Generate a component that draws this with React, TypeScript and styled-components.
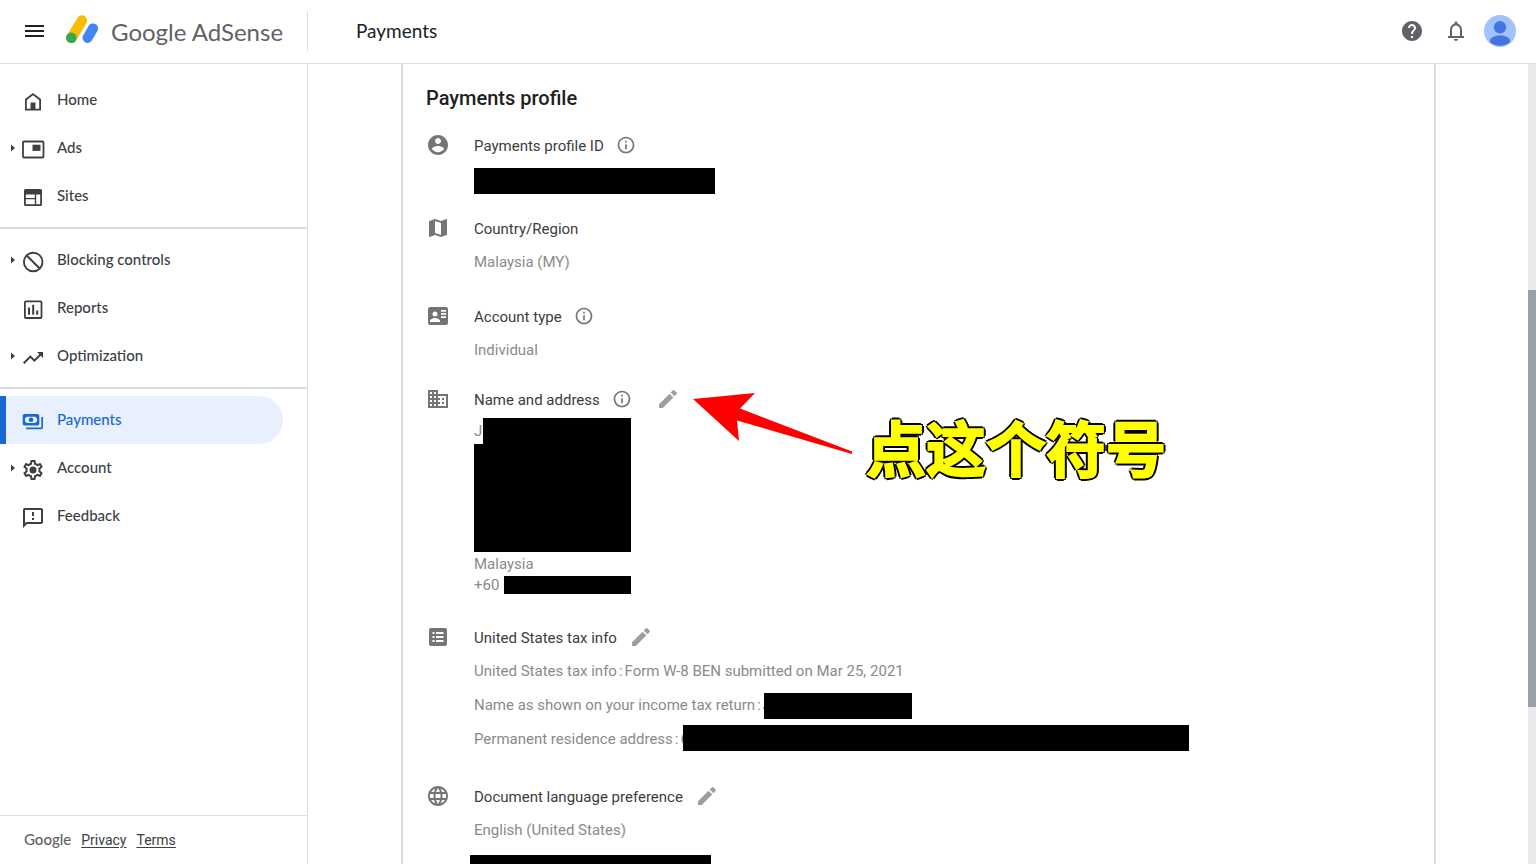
import React from "react";
import styled, { createGlobalStyle, css } from "styled-components";

const brandFont = `Lato, "Open Sans", sans-serif`;
const bodyFont = `Roboto, "Liberation Sans", sans-serif`;

const GlobalStyle = createGlobalStyle`
  *, *::before, *::after { box-sizing: border-box; }
  body { margin: 0; background: #fff; font-family: ${bodyFont}; color: #3c4043; }
  button { border: 0; padding: 0; background: none; color: inherit; font: inherit; cursor: pointer; }
  h1, h2, h3, p, ul { margin: 0; padding: 0; font-size: inherit; font-weight: inherit; }
  ul { list-style: none; }
  svg { display: block; flex: none; }
`;

const Shell = styled.div`
  display: grid;
  grid-template-rows: 64px minmax(0, 1fr);
  height: 100vh;
  overflow: hidden;
`;

const Header = styled.header`
  display: flex;
  align-items: center;
  border-bottom: 1px solid #e0e0e0;
  padding: 0 20px 1px 0;
`;

const BrandArea = styled.div`
  display: flex;
  align-items: center;
  width: 308px;
  height: 40px;
  padding-left: 22px;
  border-right: 1px solid #e0e0e0;
`;

const IconButton = styled.button`
  display: flex;
  color: #5f6368;
`;

const MenuButton = styled(IconButton)`
  color: #202124;
  margin-right: 18px;
`;

const Brand = styled.a`
  display: flex;
  align-items: center;
  gap: 13px;
  color: #5f6368;
  font: 400 24px/32px ${brandFont};
  text-decoration: none;
  white-space: nowrap;
`;

const BrandName = styled.span`
  padding-top: 2px;
`;

const PageTitle = styled.h1`
  flex: 1;
  padding-left: 48px;
  color: #202124;
  font: 400 19px/24px ${brandFont};
`;

const HeaderActions = styled.div`
  display: flex;
  align-items: center;
  gap: 20px;
`;

const AvatarButton = styled.button`
  margin-left: -4px;
`;

const Body = styled.div`
  display: grid;
  grid-template-columns: 308px minmax(0, 1fr) 8px;
  min-height: 0;
`;

const Sidebar = styled.nav`
  display: flex;
  flex-direction: column;
  min-height: 0;
  border-right: 1px solid #e0e0e0;
`;

const NavGroups = styled.div`
  flex: 1;
  min-height: 0;
  padding-top: 12px;
`;

const NavGroup = styled.ul`
  & + & {
    margin-top: 7px;
    padding-top: 7px;
    border-top: 2px solid #dadce0;
  }
`;

const NavLink = styled.a<{ $active?: boolean }>`
  display: flex;
  align-items: center;
  height: 48px;
  margin-right: 24px;
  color: #3c4043;
  font: 500 15px/20px ${brandFont};
  text-decoration: none;
  ${(p) =>
    p.$active &&
    css`
      color: #1967d2;
      background: #e8f0fe;
      border-radius: 0 24px 24px 0;
      box-shadow: inset 6px 0 #1967d2;
    `}
`;

const ExpandMark = styled.span`
  display: flex;
  justify-content: flex-end;
  width: 21px;
  padding-right: 6px;
`;

const NavIcon = styled.span`
  padding-top: 4px;
  margin-right: 12px;
`;

const NavLabel = styled.span`
  padding-bottom: 2px;
`;

const Footer = styled.footer`
  display: flex;
  align-items: center;
  gap: 10px;
  height: 49px;
  padding-left: 24px;
  border-top: 1px solid #e0e0e0;
  font-size: 14px;
  line-height: 20px;
  color: #3c4043;
`;

const FooterBrand = styled.span`
  padding-bottom: 2px;
  font: 500 15px/20px ${brandFont};
  color: #5f6368;
`;

const FooterLink = styled.a`
  color: inherit;
  text-underline-offset: 2px;
`;

const Main = styled.main`
  overflow: hidden;
  padding: 0 92px 0 93px;
`;

const Card = styled.section`
  position: relative;
  min-height: 100%;
  padding: 20px 24px 0 23px;
  border: solid #dadce0;
  border-width: 0 2px;
`;

const CardTitle = styled.h2`
  margin-bottom: 21px;
  color: #212121;
  font-size: 20px;
  font-weight: 500;
  line-height: 28px;
`;

const Entry = styled.section<{ $after: number }>`
  display: grid;
  grid-template-columns: 24px minmax(0, 1fr);
  column-gap: 24px;
  margin-bottom: ${(p) => p.$after}px;
  color: #757575;
  white-space: nowrap;
`;

const EntryHead = styled.div`
  display: flex;
  align-items: center;
  gap: 12px;
  height: 24px;
  color: #3c3c3c;
  font-size: 15px;
  line-height: 24px;
`;

const EntryLabel = styled.h3`
  padding-top: 2px;
`;

const InfoButton = styled(IconButton)`
  color: #757575;
  & + button { margin-left: 12px; }
`;

const EditButton = styled(IconButton)`
  color: #9e9e9e;
`;

const Values = styled.div<{ $top?: number; $gap?: number }>`
  display: flex;
  flex-direction: column;
  gap: ${(p) => p.$gap ?? 0}px;
  padding-top: ${(p) => p.$top ?? 10}px;
  color: #8a8a8a;
  font-size: 15px;
  line-height: 24px;
`;

const Value = styled.div<{ $align?: string; $height?: number }>`
  display: flex;
  align-items: ${(p) => p.$align ?? "flex-start"};
  height: ${(p) => p.$height ?? 24}px;
  line-height: ${(p) => p.$height ?? 24}px;
`;

const Colon = styled.span`
  padding: 0 2px;
`;

const Redaction = styled.span<{ $w: number; $h?: number; $shift?: number }>`
  flex: none;
  width: ${(p) => p.$w}px;
  height: ${(p) => p.$h ?? 26}px;
  margin-left: ${(p) => p.$shift ?? 0}px;
  background: #000;
  z-index: 1;
`;

const Annotation = styled.div`
  position: absolute;
  left: 290px;
  top: 328px;
  display: flex;
  pointer-events: none;
`;

const Callout = styled.p`
  padding: 10px 0 0 13px;
  color: #ff0;
  font: 700 60px/88px "Noto Sans CJK SC", sans-serif;
  -webkit-text-stroke: 2px #ff0;
  text-shadow:
    3px 0 #000, -3px 0 #000, 0 3px #000, 0 -3px #000,
    2px 2px #000, -2px 2px #000, 2px -2px #000, -2px -2px #000;
  white-space: nowrap;
`;

const ScrollTrack = styled.div`
  display: grid;
  grid-template-rows: 226fr 417fr 157fr;
  background: #e8eaed;
`;

const ScrollThumb = styled.div`
  grid-row: 2;
  background: #9aa0a6;
`;

type IconProps = { size?: number; children: React.ReactNode };
const Icon = ({ size = 24, children }: IconProps) => (
  <svg width={size} height={size} viewBox="0 0 24 24" fill="currentColor" aria-hidden="true">
    {children}
  </svg>
);

const navIcons = {
  home: (
    <>
      <path fillRule="evenodd" d="M12 3l8 6v11.500H4V9zM12 5.300L5.800 10v8.800h12.400V10z" />
      <path d="M9.500 12.500h5v7h-5z" />
    </>
  ),
  ads: (
    <>
      <rect x="2" y="3.500" width="20.500" height="16" rx="1" fill="none" stroke="currentColor" strokeWidth="1.800" />
      <path d="M11.500 6.700h8v6.200h-8z" />
    </>
  ),
  sites: (
    <path
      fillRule="evenodd"
      d="M4.500 3h15A1.500 1.500 0 0121 4.500v14a1.500 1.500 0 01-1.500 1.500h-15A1.500 1.500 0 013 18.500v-14A1.500 1.500 0 014.500 3zM4.800 8.400v3.500h9V8.400zM4.800 13.200v5h9v-5zM15.200 8.400v9.800h4V8.400z"
    />
  ),
  block: (
    <g fill="none" stroke="currentColor" strokeWidth="1.900">
      <circle cx="12.200" cy="12" r="9.300" />
      <path d="M5.700 5.500l13 13" />
    </g>
  ),
  reports: (
    <>
      <rect x="3.900" y="3.400" width="16.600" height="16.600" rx="1" fill="none" stroke="currentColor" strokeWidth="1.800" />
      <path d="M7 9.400h2v7.300H7zM11.200 6.700h2v10h-2zM15.200 12.500h2v4.200h-2z" />
    </>
  ),
  trend: <path d="M16 6l2.290 2.290-4.880 4.880-4-4L2 16.590 3.410 18l6-6 4 4 6.300-6.290L22 12V6z" />,
  payments: (
    <>
      <path
        fillRule="evenodd"
        d="M3.500 4h13A1.800 1.800 0 0118.300 5.800v8A1.800 1.800 0 0116.500 15.600h-13A1.800 1.800 0 011.700 13.800v-8A1.800 1.800 0 013.500 4zM5.500 6.700A1.800 1.800 0 014 8.200v3.200a1.800 1.800 0 011.500 1.500h9a1.800 1.800 0 011.500-1.500V8.200a1.800 1.800 0 01-1.500-1.500z"
      />
      <circle cx="10" cy="9.800" r="2.300" />
      <path d="M20.300 7H22v10.500a1.800 1.800 0 01-1.800 1.800H5v-1.900h15.300z" />
    </>
  ),
  account: (
    <>
      <path d="M19.430 12.980c.04-.32.07-.64.07-.98s-.03-.66-.07-.98l2.110-1.650c.19-.15.24-.42.12-.64l-2-3.460a.5.5 0 00-.61-.22l-2.490 1c-.52-.4-1.080-.73-1.690-.98l-.38-2.650A.488.488 0 0014 2h-4c-.25 0-.46.18-.49.42l-.38 2.650c-.61.25-1.170.59-1.690.98l-2.490-1a.566.566 0 00-.18-.03c-.17 0-.34.09-.43.25l-2 3.460c-.13.22-.07.49.12.64l2.110 1.650c-.04.32-.07.65-.07.98s.03.66.07.98l-2.110 1.650c-.19.15-.24.42-.12.64l2 3.460a.5.5 0 00.61.22l2.490-1c.52.4 1.080.73 1.690.98l.38 2.650c.03.24.24.42.49.42h4c.25 0 .46-.18.49-.42l.38-2.650c.61-.25 1.170-.59 1.690-.98l2.490 1c.06.02.12.03.18.03.17 0 .34-.09.43-.25l2-3.460c.12-.22.07-.49-.12-.64zm-1.980-1.710c.04.31.05.52.05.73s-.02.43-.05.73l-.14 1.130.89.7 1.080.84-.7 1.210-1.270-.51-1.040-.42-.9.680c-.43.32-.84.56-1.250.73l-1.060.43-.16 1.130-.2 1.350h-1.400l-.19-1.350-.16-1.130-1.060-.43c-.43-.18-.83-.41-1.230-.71l-.91-.7-1.060.43-1.270.51-.7-1.210 1.080-.84.89-.7-.14-1.130c-.03-.31-.05-.54-.05-.74s.02-.43.05-.73l.14-1.130-.89-.7-1.080-.84.7-1.210 1.270.51 1.040.42.9-.68c.43-.32.84-.56 1.250-.73l1.060-.43.16-1.130.2-1.350h1.390l.19 1.350.16 1.130 1.060.43c.43.18.83.41 1.230.71l.91.7 1.060-.43 1.270-.51.7 1.210-1.070.85-.89.7z" />
      <circle cx="12" cy="12" r="3.500" />
    </>
  ),
  feedback: (
    <path d="M20 2H4c-1.100 0-1.990.9-1.990 2L2 22l4-4h14c1.100 0 2-.9 2-2V4c0-1.100-.9-2-2-2zm0 14H5.170l-.59.59-.58.58V4h16zm-9-4h2v2h-2zm0-6h2v4h-2z" />
  ),
};

const InfoIcon = () => (
  <Icon size={20}>
    <path d="M11 7h2v2h-2zm0 4h2v6h-2zm1-9C6.480 2 2 6.480 2 12s4.480 10 10 10 10-4.480 10-10S17.520 2 12 2zm0 18c-4.410 0-8-3.590-8-8s3.590-8 8-8 8 3.590 8 8-3.590 8-8 8z" />
  </Icon>
);

const PencilIcon = () => (
  <Icon>
    <path d="M3 17.200V20.500q0 .5.500.5h3.300L17.300 10.500l-3.800-3.800zM20.700 7.100a1 1 0 000-1.400L18.300 3.300a1 1 0 00-1.400 0l-2.200 2.200 3.800 3.800z" />
  </Icon>
);

const entryIcons = {
  person: (
    <path d="M12 2C6.480 2 2 6.480 2 12s4.480 10 10 10 10-4.480 10-10S17.520 2 12 2zm0 3c1.660 0 3 1.340 3 3s-1.340 3-3 3-3-1.340-3-3 1.340-3 3-3zm0 14.200c-2.500 0-4.710-1.280-6-3.220.03-1.990 4-3.080 6-3.080 1.990 0 5.970 1.090 6 3.080-1.290 1.940-3.500 3.220-6 3.220z" />
  ),
  map: (
    <path d="M20.500 3l-.16.03L15 5.100 9 3 3.360 4.900c-.21.07-.36.25-.36.48V20.500c0 .28.22.5.5.5l.16-.03L9 18.900l6 2.100 5.640-1.900c.21-.07.36-.25.36-.48V3.500c0-.28-.22-.5-.5-.5zM15 19l-6-2.110V5l6 2.110V19z" />
  ),
  card: (
    <path
      fillRule="evenodd"
      d="M4 3h16a2 2 0 012 2v14a2 2 0 01-2 2H4a2 2 0 01-2-2V5a2 2 0 012-2zM9 7.500a2.500 2.500 0 100 5 2.500 2.500 0 000-5zM4 18h10v-1c0-2-3.300-3-5-3s-5 1-5 3zM15 6h5v1.700h-5zM15 9.100h5v1.700h-5zM15 12.200h5v1.700h-5z"
    />
  ),
  domain: (
    <path d="M12 7V3H2v18h20V7H12zM6 19H4v-2h2v2zm0-4H4v-2h2v2zm0-4H4V9h2v2zm0-4H4V5h2v2zm4 12H8v-2h2v2zm0-4H8v-2h2v2zm0-4H8V9h2v2zm0-4H8V5h2v2zm10 12h-8v-2h2v-2h-2v-2h2v-2h-2V9h8v10zm-2-8h-2v2h2v-2zm0 4h-2v2h2v-2z" />
  ),
  list: (
    <path
      fillRule="evenodd"
      d="M5 3h14a2 2 0 012 2v14a2 2 0 01-2 2H5a2 2 0 01-2-2V5a2 2 0 012-2zM6.500 7v2h2V7zM10 7v2h7.500V7zM6.500 11v2h2v-2zM10 11v2h7.500v-2zM6.500 15v2h2v-2zM10 15v2h7.500v-2z"
    />
  ),
  globe: (
    <path d="M11.990 2C6.470 2 2 6.480 2 12s4.470 10 9.990 10C17.520 22 22 17.520 22 12S17.520 2 11.990 2zm6.930 6h-2.950a15.650 15.650 0 00-1.380-3.560A8.030 8.030 0 0118.920 8zM12 4.040c.83 1.200 1.480 2.530 1.910 3.960h-3.820c.43-1.430 1.080-2.760 1.910-3.960zM4.260 14C4.100 13.360 4 12.690 4 12s.1-1.360.26-2h3.380c-.08.66-.14 1.320-.14 2s.06 1.340.14 2H4.260zm.82 2h2.950c.32 1.250.78 2.450 1.380 3.560A7.987 7.987 0 015.080 16zm2.950-8H5.080a7.987 7.987 0 014.330-3.560A15.650 15.650 0 008.030 8zM12 19.960c-.83-1.200-1.480-2.530-1.910-3.960h3.820c-.43 1.430-1.080 2.760-1.910 3.960zM14.340 14H9.660c-.09-.66-.16-1.320-.16-2s.07-1.350.16-2h4.680c.09.65.16 1.320.16 2s-.07 1.340-.16 2zm.25 5.560c.6-1.110 1.060-2.310 1.380-3.560h2.950a8.030 8.030 0 01-4.330 3.560zM16.360 14c.08-.66.14-1.320.14-2s-.06-1.340-.14-2h3.380c.16.64.26 1.310.26 2s-.1 1.360-.26 2h-3.380z" />
  ),
};

type NavItem = { label: string; icon: React.ReactNode; expandable?: boolean; active?: boolean };

const navGroups: NavItem[][] = [
  [
    { label: "Home", icon: navIcons.home },
    { label: "Ads", icon: navIcons.ads, expandable: true },
    { label: "Sites", icon: navIcons.sites },
  ],
  [
    { label: "Blocking controls", icon: navIcons.block, expandable: true },
    { label: "Reports", icon: navIcons.reports },
    { label: "Optimization", icon: navIcons.trend, expandable: true },
  ],
  [
    { label: "Payments", icon: navIcons.payments, active: true },
    { label: "Account", icon: navIcons.account, expandable: true },
    { label: "Feedback", icon: navIcons.feedback },
  ],
];

type ProfileEntryProps = {
  icon: React.ReactNode;
  label: string;
  info?: boolean;
  editable?: boolean;
  after: number;
  children: React.ReactNode;
};

const ProfileEntry = ({ icon, label, info, editable, after, children }: ProfileEntryProps) => (
  <Entry $after={after}>
    <Icon>{icon}</Icon>
    <div>
      <EntryHead>
        <EntryLabel>{label}</EntryLabel>
        {info && (
          <InfoButton type="button" aria-label={`About ${label}`}>
            <InfoIcon />
          </InfoButton>
        )}
        {editable && (
          <EditButton type="button" aria-label={`Edit ${label}`}>
            <PencilIcon />
          </EditButton>
        )}
      </EntryHead>
      {children}
    </div>
  </Entry>
);

export default function App() {
  return (
    <Shell>
      <GlobalStyle />
      <Header>
        <BrandArea>
          <MenuButton type="button" aria-label="Main menu">
            <Icon>
              <path d="M3 6h19v2H3zM3 11h19v2H3zM3 16h19v2H3z" />
            </Icon>
          </MenuButton>
          <Brand href="#home">
            <svg width="34" height="32" viewBox="0 0 34 32" aria-hidden="true">
              <path d="M18 5.500L7.500 23" stroke="#fbbc04" strokeWidth="10.400" strokeLinecap="round" />
              <circle cx="7.300" cy="22.800" r="5.300" fill="#34a853" />
              <path d="M29 13.500l-5.400 9.300" stroke="#4285f4" strokeWidth="10.200" strokeLinecap="round" />
            </svg>
            <BrandName>Google AdSense</BrandName>
          </Brand>
        </BrandArea>
        <PageTitle>Payments</PageTitle>
        <HeaderActions>
          <IconButton type="button" aria-label="Help">
            <Icon>
              <path d="M12 2C6.480 2 2 6.480 2 12s4.480 10 10 10 10-4.480 10-10S17.520 2 12 2zm1 17h-2v-2h2v2zm2.070-7.750l-.9.920C13.450 12.900 13 13.500 13 15h-2v-.5c0-1.100.45-2.100 1.170-2.830l1.240-1.260c.37-.36.590-.86.590-1.410 0-1.100-.9-2-2-2s-2 .9-2 2H8c0-2.210 1.790-4 4-4s4 1.790 4 4c0 .88-.36 1.680-.93 2.250z" />
            </Icon>
          </IconButton>
          <IconButton type="button" aria-label="Notifications">
            <Icon>
              <path d="M18 17v-6c0-3.070-1.630-5.640-4.500-6.320V4c0-.83-.67-1.500-1.500-1.500s-1.500.67-1.500 1.500v.68C7.640 5.360 6 7.920 6 11v6H4v2h16v-2zm-2 0H8v-6c0-2.480 1.510-4.500 4-4.500s4 2.020 4 4.500zm-4 5c1.100 0 2-.9 2-2h-4c0 1.100.9 2 2 2z" />
            </Icon>
          </IconButton>
          <AvatarButton type="button" aria-label="Google account">
            <svg width="32" height="32" viewBox="0 0 32 32" aria-hidden="true">
              <circle cx="16" cy="16" r="16" fill="#a0c3ff" />
              <circle cx="16" cy="12.300" r="6.200" fill="#4374e0" />
              <path d="M6 25.800c0-3.600 5.500-5.300 10-5.300s10 1.700 10 5.300v1.500a16 16 0 01-20 0z" fill="#4374e0" />
            </svg>
          </AvatarButton>
        </HeaderActions>
      </Header>

      <Body>
        <Sidebar aria-label="Main">
          <NavGroups>
            {navGroups.map((group) => (
              <NavGroup key={group[0].label}>
                {group.map((item) => (
                  <li key={item.label}>
                    <NavLink href={`#${item.label}`} $active={item.active} aria-current={item.active ? "page" : undefined}>
                      <ExpandMark>
                        {item.expandable && (
                          <svg width="4" height="8" viewBox="0 0 4 8" fill="currentColor" aria-hidden="true">
                            <path d="M0 .5L4 4 0 7.500z" />
                          </svg>
                        )}
                      </ExpandMark>
                      <NavIcon>
                        <Icon>{item.icon}</Icon>
                      </NavIcon>
                      <NavLabel>{item.label}</NavLabel>
                    </NavLink>
                  </li>
                ))}
              </NavGroup>
            ))}
          </NavGroups>
          <Footer>
            <FooterBrand>Google</FooterBrand>
            <FooterLink href="#privacy">Privacy</FooterLink>
            <FooterLink href="#terms">Terms</FooterLink>
          </Footer>
        </Sidebar>

        <Main>
          <Card>
            <CardTitle>Payments profile</CardTitle>

            <ProfileEntry icon={entryIcons.person} label="Payments profile ID" info after={22}>
              <Values $top={11}>
                <Redaction $w={241} />
              </Values>
            </ProfileEntry>

            <ProfileEntry icon={entryIcons.map} label="Country/Region" after={30}>
              <Values>
                <Value>Malaysia (MY)</Value>
              </Values>
            </ProfileEntry>

            <ProfileEntry icon={entryIcons.card} label="Account type" info after={25}>
              <Values>
                <Value>Individual</Value>
              </Values>
            </ProfileEntry>

            <ProfileEntry icon={entryIcons.domain} label="Name and address" info editable after={31}>
              <Values $top={7}>
                <Value $height={26}>
                  J<Redaction $w={148} $shift={1} />
                </Value>
                <Redaction $w={157} $h={108} />
                <Value $height={24}>Malaysia</Value>
                <Value $height={18}>
                  +60&nbsp;
                  <Redaction $w={127} $h={18} $shift={1} />
                </Value>
              </Values>
            </ProfileEntry>

            <ProfileEntry icon={entryIcons.list} label="United States tax info" editable after={33}>
              <Values $gap={10}>
                <Value>
                  United States tax info<Colon>:</Colon>Form W-8 BEN submitted on Mar 25, 2021
                </Value>
                <Value>
                  Name as shown on your income tax return<Colon>:</Colon>J
                  <Redaction $w={148} $shift={-7} />
                </Value>
                <Value $align="flex-end">
                  Permanent residence address<Colon>:</Colon>6
                  <Redaction $w={506} $shift={-6} />
                </Value>
              </Values>
            </ProfileEntry>

            <ProfileEntry icon={entryIcons.globe} label="Document language preference" editable after={0}>
              <Values $gap={13}>
                <Value>English (United States)</Value>
                <Redaction $w={241} $shift={-4} />
              </Values>
            </ProfileEntry>

            <Annotation>
              <svg width="160" height="62" viewBox="0 0 160 62" fill="#f00" aria-hidden="true">
                <path d="M0 7L62 1 47 16.500 159 59.500V62L44 28.500 46 49z" />
              </svg>
              <Callout>点这个符号</Callout>
            </Annotation>
          </Card>
        </Main>

        <ScrollTrack aria-hidden="true">
          <ScrollThumb />
        </ScrollTrack>
      </Body>
    </Shell>
  );
}
